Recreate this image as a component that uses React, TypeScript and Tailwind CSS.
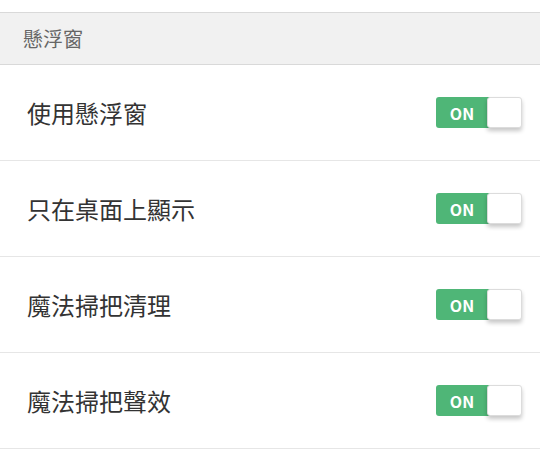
const rows = ["使用懸浮窗", "只在桌面上顯示", "魔法掃把清理", "魔法掃把聲效"]

function Toggle() {
  return (
    <div className="relative flex h-[31px] w-[86px]">
      <div className="flex h-full w-[54px] items-center justify-center rounded-l-[3px] bg-[#4fb677] pr-[2px] text-[16px] font-bold text-white">
        ON
      </div>
      <div className="absolute right-0 top-0 h-[31px] w-[35px] rounded-[3px] border border-[#dcdcdc] bg-white shadow-[0_3px_4px_rgba(0,0,0,0.22)]" />
    </div>
  )
}

export default function App() {
  return (
    <div
      className="h-[449px] w-[540px] overflow-hidden bg-white pt-[12px]"
      style={{ fontFamily: '"Noto Sans CJK TC", "Noto Sans", sans-serif' }}
    >
      <div className="flex h-[53px] items-center border-y border-[#d9d9d9] bg-[#f1f1f1] pl-[23px] text-[20px] text-[#666]">
        懸浮窗
      </div>
      {rows.map((label) => (
        <div key={label} className="flex h-[96px] items-center justify-between border-b border-[#e6e6e6] pl-[27px] pr-[18px]">
          <span className="text-[24px] text-[#333]">{label}</span>
          <Toggle />
        </div>
      ))}
    </div>
  )
}
